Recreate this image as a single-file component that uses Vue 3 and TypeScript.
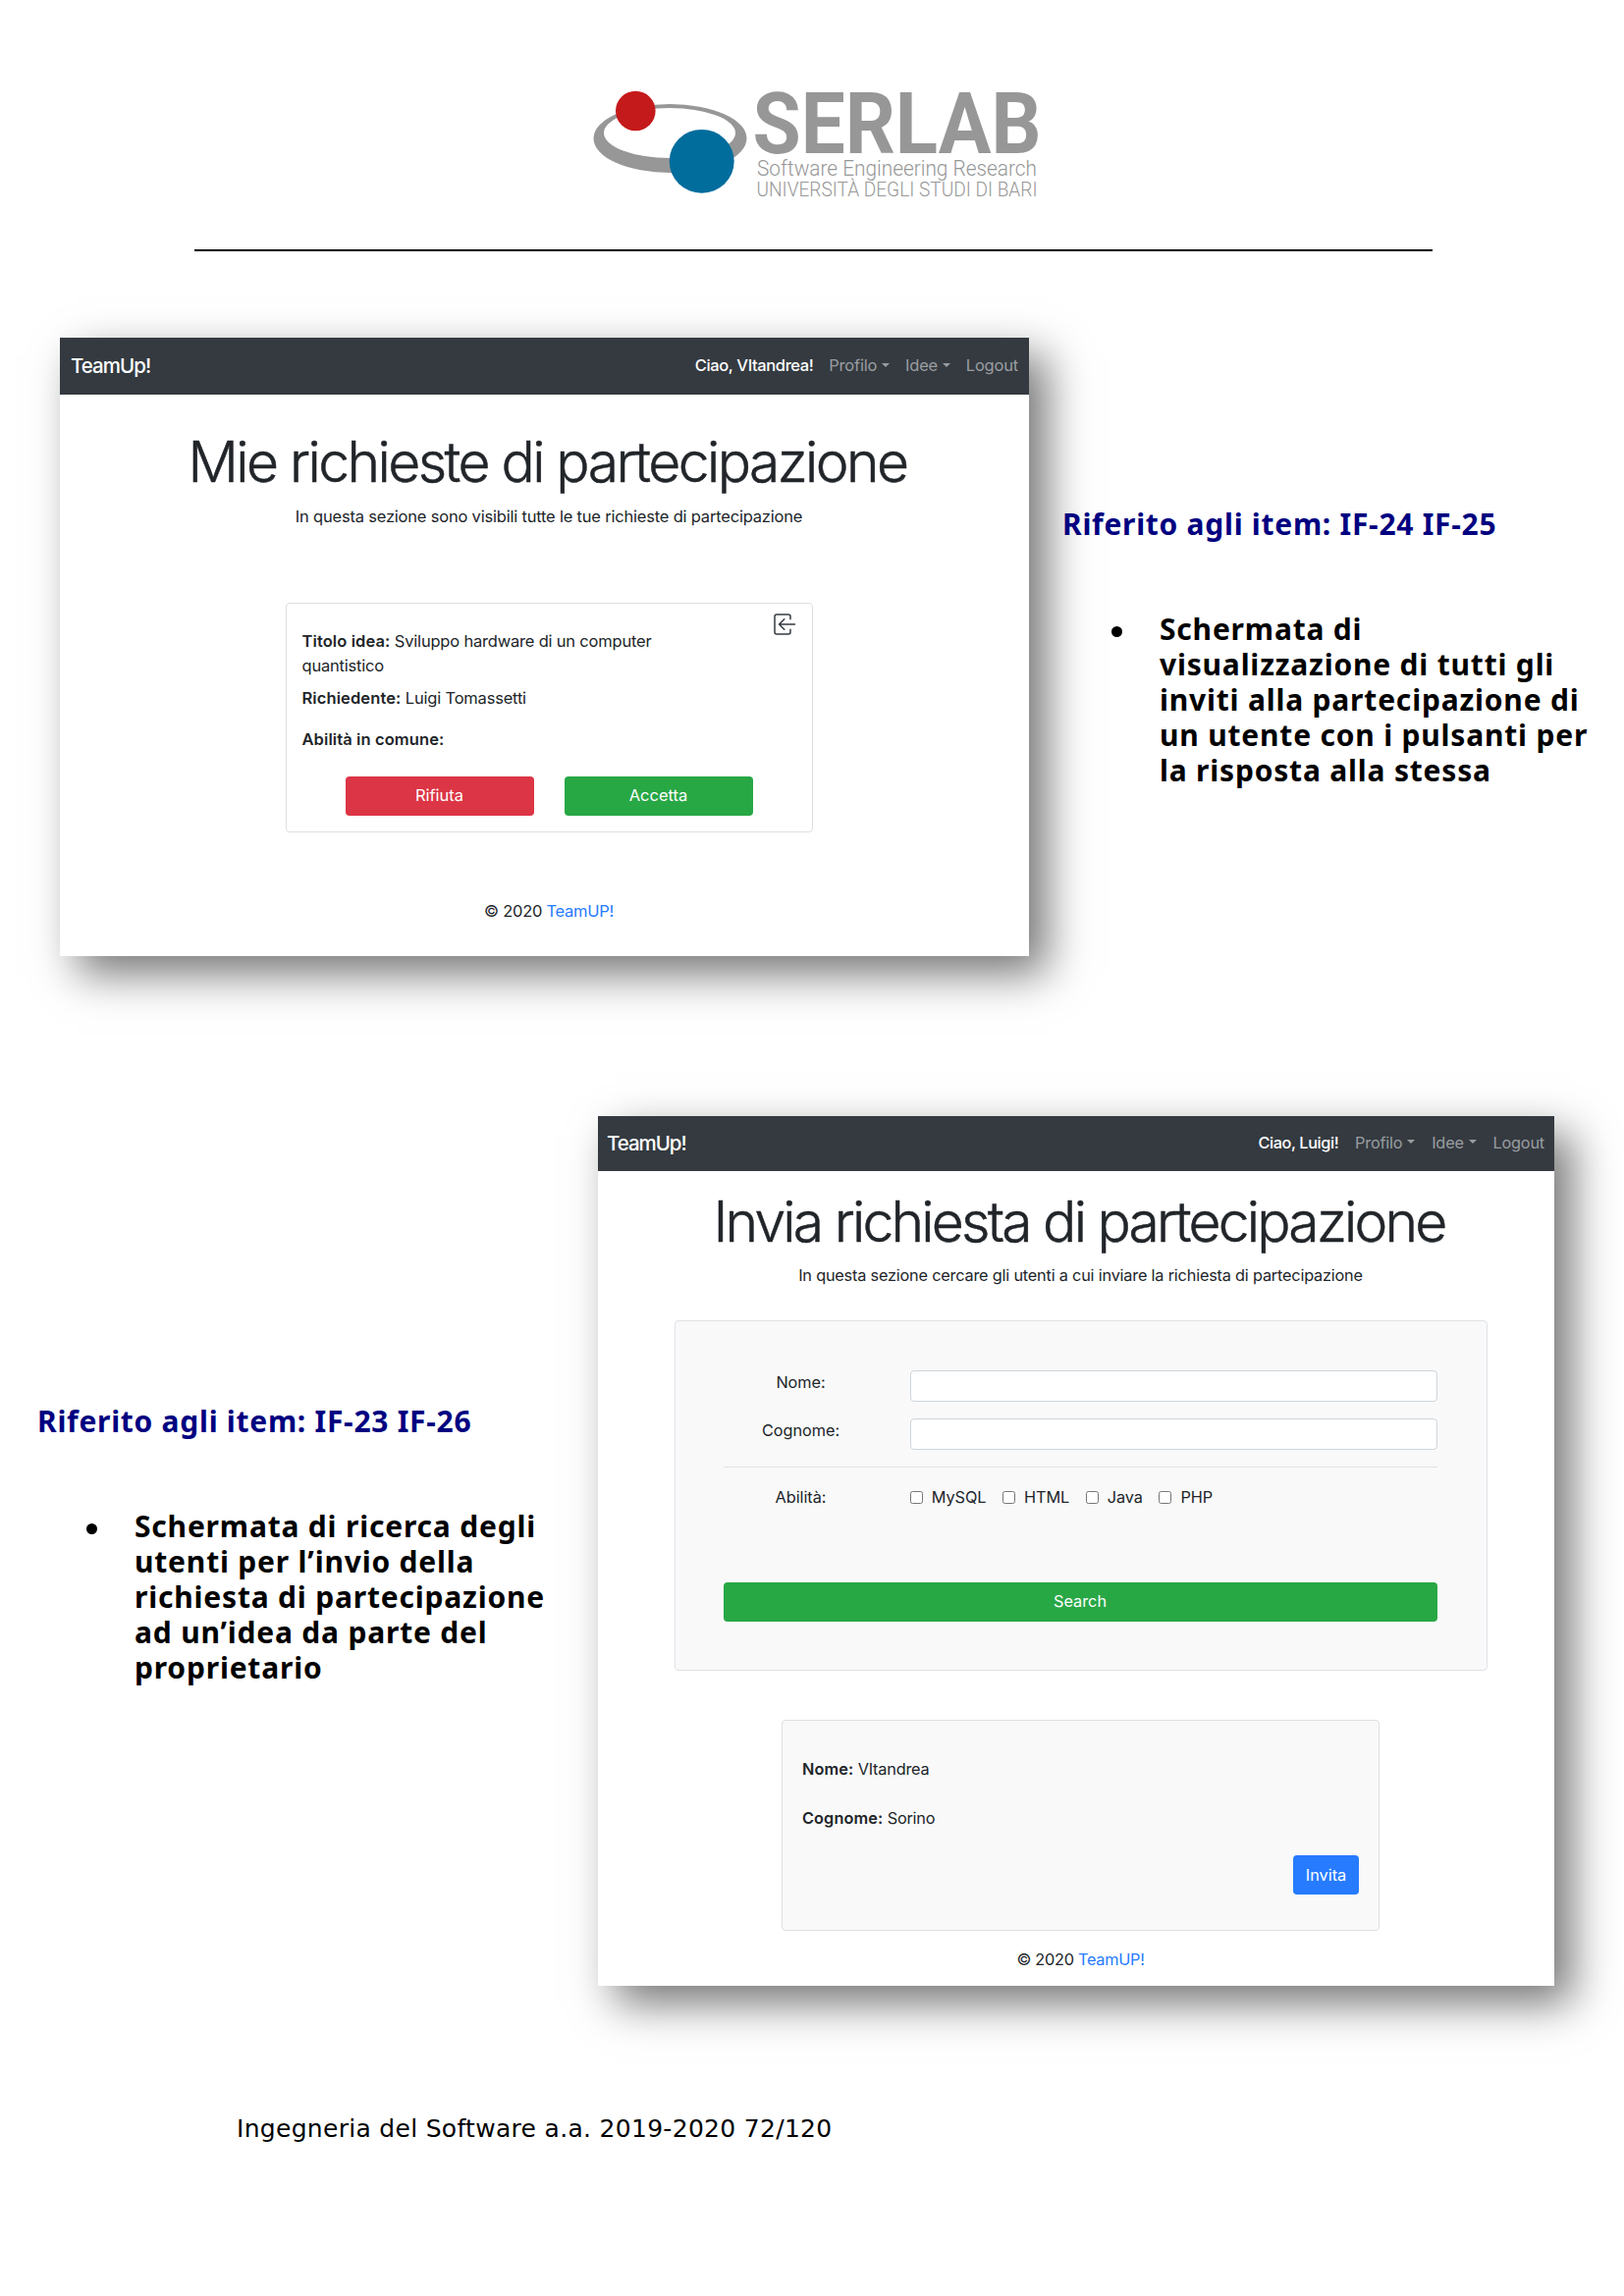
<script setup lang="ts">
interface Note { title: string; lines: string[] }

const noteA: Note = {
  title: 'Riferito agli item: IF-24 IF-25',
  lines: ['Schermata di', 'visualizzazione di tutti gli', 'inviti alla partecipazione di', 'un utente con i pulsanti per', 'la risposta alla stessa'],
}
const noteB: Note = {
  title: 'Riferito agli item: IF-23 IF-26',
  lines: ['Schermata di ricerca degli', 'utenti per l’invio della', 'richiesta di partecipazione', 'ad un’idea da parte del', 'proprietario'],
}
const skills: string[] = ['MySQL', 'HTML', 'Java', 'PHP']
</script>

<template>
  <div class="page">
    <header class="letterhead">
      <svg class="logo" width="500" height="150" viewBox="0 0 500 150">
        <path fill="#979797" fill-rule="evenodd" d="M24.5 71a78 35 0 1 0 156 0a78 35 0 1 0 -156 0ZM35 65.5a67 25.5 0 1 0 134 0a67 25.5 0 1 0 -134 0Z" />
        <circle cx="67.3" cy="43" r="20.3" fill="#c51a1b" />
        <ellipse cx="134.7" cy="94.3" rx="33" ry="32.4" fill="#006d9d" />
        <text class="brand-name" x="186.5" y="86" textLength="294" lengthAdjust="spacingAndGlyphs">SERLAB</text>
        <text class="brand-sub" x="191" y="108.6" textLength="285" lengthAdjust="spacingAndGlyphs">Software Engineering Research</text>
        <text class="brand-uni" x="190.500" y="130" textLength="286" lengthAdjust="spacingAndGlyphs">UNIVERSITÀ DEGLI STUDI DI BARI</text>
      </svg>
    </header>

    <section class="row row-a">
      <div class="shot shot-a">
        <nav class="bar">
          <span class="brand">TeamUp!</span>
          <span class="hello">Ciao, VItandrea!</span>
          <span class="link drop">Profilo</span>
          <span class="link drop">Idee</span>
          <span class="link">Logout</span>
        </nav>
        <div class="content">
          <h1>Mie richieste di partecipazione</h1>
          <p class="lead">In questa sezione sono visibili tutte le tue richieste di partecipazione</p>
          <div class="request">
            <div class="request-top">
              <div class="request-text">
                <p><b>Titolo idea:</b> Sviluppo hardware di un computer<br />quantistico</p>
                <p class="who"><b>Richiedente:</b> Luigi Tomassetti</p>
                <p class="common"><b>Abilità in comune:</b></p>
              </div>
              <svg class="enter" width="23" height="22" viewBox="0 0 23 22" fill="none" stroke="#343a40" stroke-width="1.5" stroke-linecap="round" stroke-linejoin="round">
                <path d="M17 5.800V3Q17 1 15 1H3Q1 1 1 3V19Q1 21 3 21H15Q17 21 17 19V16.200M21.500 11H5.500M10.800 5.800L5.500 11L10.800 16.200" />
              </svg>
            </div>
            <div class="actions">
              <button class="btn red">Rifiuta</button>
              <button class="btn green">Accetta</button>
            </div>
          </div>
          <p class="copy">© 2020 <a>TeamUP!</a></p>
        </div>
      </div>
      <aside class="note">
        <h2>{{ noteA.title }}</h2>
        <div class="item"><i class="dot"></i><div><div v-for="l in noteA.lines" :key="l">{{ l }}</div></div></div>
      </aside>
    </section>

    <section class="row row-b">
      <aside class="note">
        <h2>{{ noteB.title }}</h2>
        <div class="item"><i class="dot"></i><div><div v-for="l in noteB.lines" :key="l">{{ l }}</div></div></div>
      </aside>
      <div class="shot shot-b">
        <nav class="bar">
          <span class="brand">TeamUp!</span>
          <span class="hello">Ciao, Luigi!</span>
          <span class="link drop">Profilo</span>
          <span class="link drop">Idee</span>
          <span class="link">Logout</span>
        </nav>
        <div class="content">
          <h1>Invia richiesta di partecipazione</h1>
          <p class="lead">In questa sezione cercare gli utenti a cui inviare la richiesta di partecipazione</p>
          <form class="search" @submit.prevent>
            <div class="field"><label>Nome:</label><input type="text" /></div>
            <div class="field"><label>Cognome:</label><input type="text" /></div>
            <hr />
            <div class="field skills">
              <label>Abilità:</label>
              <span v-for="s in skills" :key="s" class="skill"><i class="box"></i>{{ s }}</span>
            </div>
            <button class="btn green wide">Search</button>
          </form>
          <div class="result">
            <p><b>Nome:</b> VItandrea</p>
            <p><b>Cognome:</b> Sorino</p>
            <button class="btn blue">Invita</button>
          </div>
          <p class="copy">© 2020 <a>TeamUP!</a></p>
        </div>
      </div>
    </section>

    <footer class="folio">Ingegneria del Software a.a. 2019-2020 72/120</footer>
  </div>
</template>

<style>
body { margin: 0; background: #fff; }
</style>

<style scoped>
.page { width: 1654px; height: 2339px; overflow: hidden; background: #fff; color: #000; }
.page * { box-sizing: border-box; }
p, h1, h2 { margin: 0; }

.letterhead { display: flex; height: 256px; margin: 0 195px 0 198px; padding: 70px 0 0 382px; border-bottom: 2px solid #000; }
.logo { display: block; overflow: visible; font-family: Roboto, sans-serif; fill: #979797; }
.brand-name { font-size: 87px; font-weight: 700; }
.brand-sub { font-size: 21.5px; font-weight: 300; }
.brand-uni { font-size: 20px; font-weight: 300; }

.row { display: flex; align-items: flex-start; }
.row-a { padding: 88px 0 0 61px; }
.row-b { padding: 163px 0 0 38px; }

.shot { flex: none; background: #fff; box-shadow: 18px 18px 42px rgba(0, 0, 0, 0.54); font-family: Inter, sans-serif; font-size: 16.5px; line-height: 25.5px; color: #212529; white-space: nowrap; }
.shot-a { width: 987px; height: 630px; }
.shot-b { width: 974px; height: 886px; font-size: 16.3px; line-height: 25px; }
.content { display: flex; flex-direction: column; align-items: center; padding-left: 9px; letter-spacing: -0.2px; }

.bar { display: flex; align-items: center; height: 58px; padding: 0 11px; background: #343a40; color: #fff; letter-spacing: -0.2px; }
.brand { margin-right: auto; font-size: 20.5px; font-weight: 500; letter-spacing: -0.95px; }
.hello { font-weight: 500; letter-spacing: -0.38px; }
.link { margin-left: 15.8px; color: #9a9da0; }
.drop { display: flex; align-items: center; }
.drop::after { content: ''; margin: 0 0 2px 5px; border: 4.5px solid transparent; border-top-color: currentColor; border-bottom: 0; }
.shot-b .bar { height: 56px; padding: 0 10px 1.5px 9px; }
.shot-b .brand { letter-spacing: -1.05px; }
.shot-b .link { margin-left: 16.8px; }

h1 { font-size: 57px; line-height: 68px; font-weight: 300; letter-spacing: -2.57px; -webkit-text-stroke: 0.5px #212529; }
.shot-a h1 { margin: 35px 3px 0 0; }
.shot-b h1 { margin: 17.7px 3px 0 0; letter-spacing: -2.78px; }
.lead { margin-top: 8.7px; }

.request { width: 537px; height: 234px; margin-top: 75px; padding: 0 16px; border: 1px solid #dfdfdf; border-radius: 4px; }
.request-top { display: flex; justify-content: space-between; }
.request-text { width: 400px; padding-top: 25.4px; }
.enter { margin-top: 10px; }
.who { margin-top: 7.7px; }
.common { margin-top: 16px; }
b { font-weight: 600; letter-spacing: 0.1px; }
.actions { display: flex; gap: 31px; margin: 24.6px 0 0 44px; }
.btn { width: 192px; height: 40px; padding: 0; border: 0; border-radius: 4px; color: #fff; font: inherit; letter-spacing: 0; }
.red { background: #dc3545; }
.green { background: #28a745; }
.blue { background: #267bff; }
.copy { margin-top: 67.5px; letter-spacing: -0.27px; }
.copy a { color: #267bff; }

.search { display: flex; flex-direction: column; width: 828px; height: 357px; margin-top: 32.5px; padding: 50px 50px 0 49px; background: #f9f9fa; border: 1px solid #dfe2e6; border-radius: 4px; letter-spacing: -0.05px; }
.field { display: flex; margin-bottom: 17px; }
.field label { width: 158px; margin-right: 32px; text-align: center; }
.field input { flex: 1; height: 32.3px; padding: 0; border: 1px solid #ced4da; border-radius: 4px; background: #fff; }
hr { width: 100%; height: 1px; margin: 0 0 17.5px; border: 0; background: #e0e1e2; }
.skills { margin-bottom: 74px; }
.skill { display: flex; align-items: center; margin-right: 16.4px; letter-spacing: -0.1px; }
.box { width: 13px; height: 13px; margin-right: 9.3px; border: 1px solid #767676; border-radius: 2.5px; background: #fff; }
.wide { width: 100%; }

.result { display: flex; flex-direction: column; width: 609px; height: 215px; margin-top: 50px; padding: 37.5px 20px 0; background: #f9f9fa; border: 1px solid #dfdfdf; border-radius: 4px; }
.result p { margin-bottom: 25px; }
.blue { align-self: flex-end; width: 67px; }
.shot-b .copy { margin-top: 17.5px; }

.note { flex: none; font: 700 30px/36px "Noto Sans", sans-serif; letter-spacing: 0.8px; white-space: nowrap; }
.row-a .note { margin: 172.2px 0 0 34px; }
.row-b .note { width: 571px; margin-top: 293px; }
.note h2 { font: inherit; color: #000080; margin-bottom: 70.7px; letter-spacing: 0.72px; }
.item { display: flex; padding-left: 50px; }
.dot { width: 11px; height: 11px; margin: 15px 38px 0 0; border-radius: 50%; background: #000; }

.folio { margin: 130.7px 0 0 241px; font: 25px/30px "DejaVu Sans", sans-serif; letter-spacing: 0.3px; white-space: nowrap; }
</style>
